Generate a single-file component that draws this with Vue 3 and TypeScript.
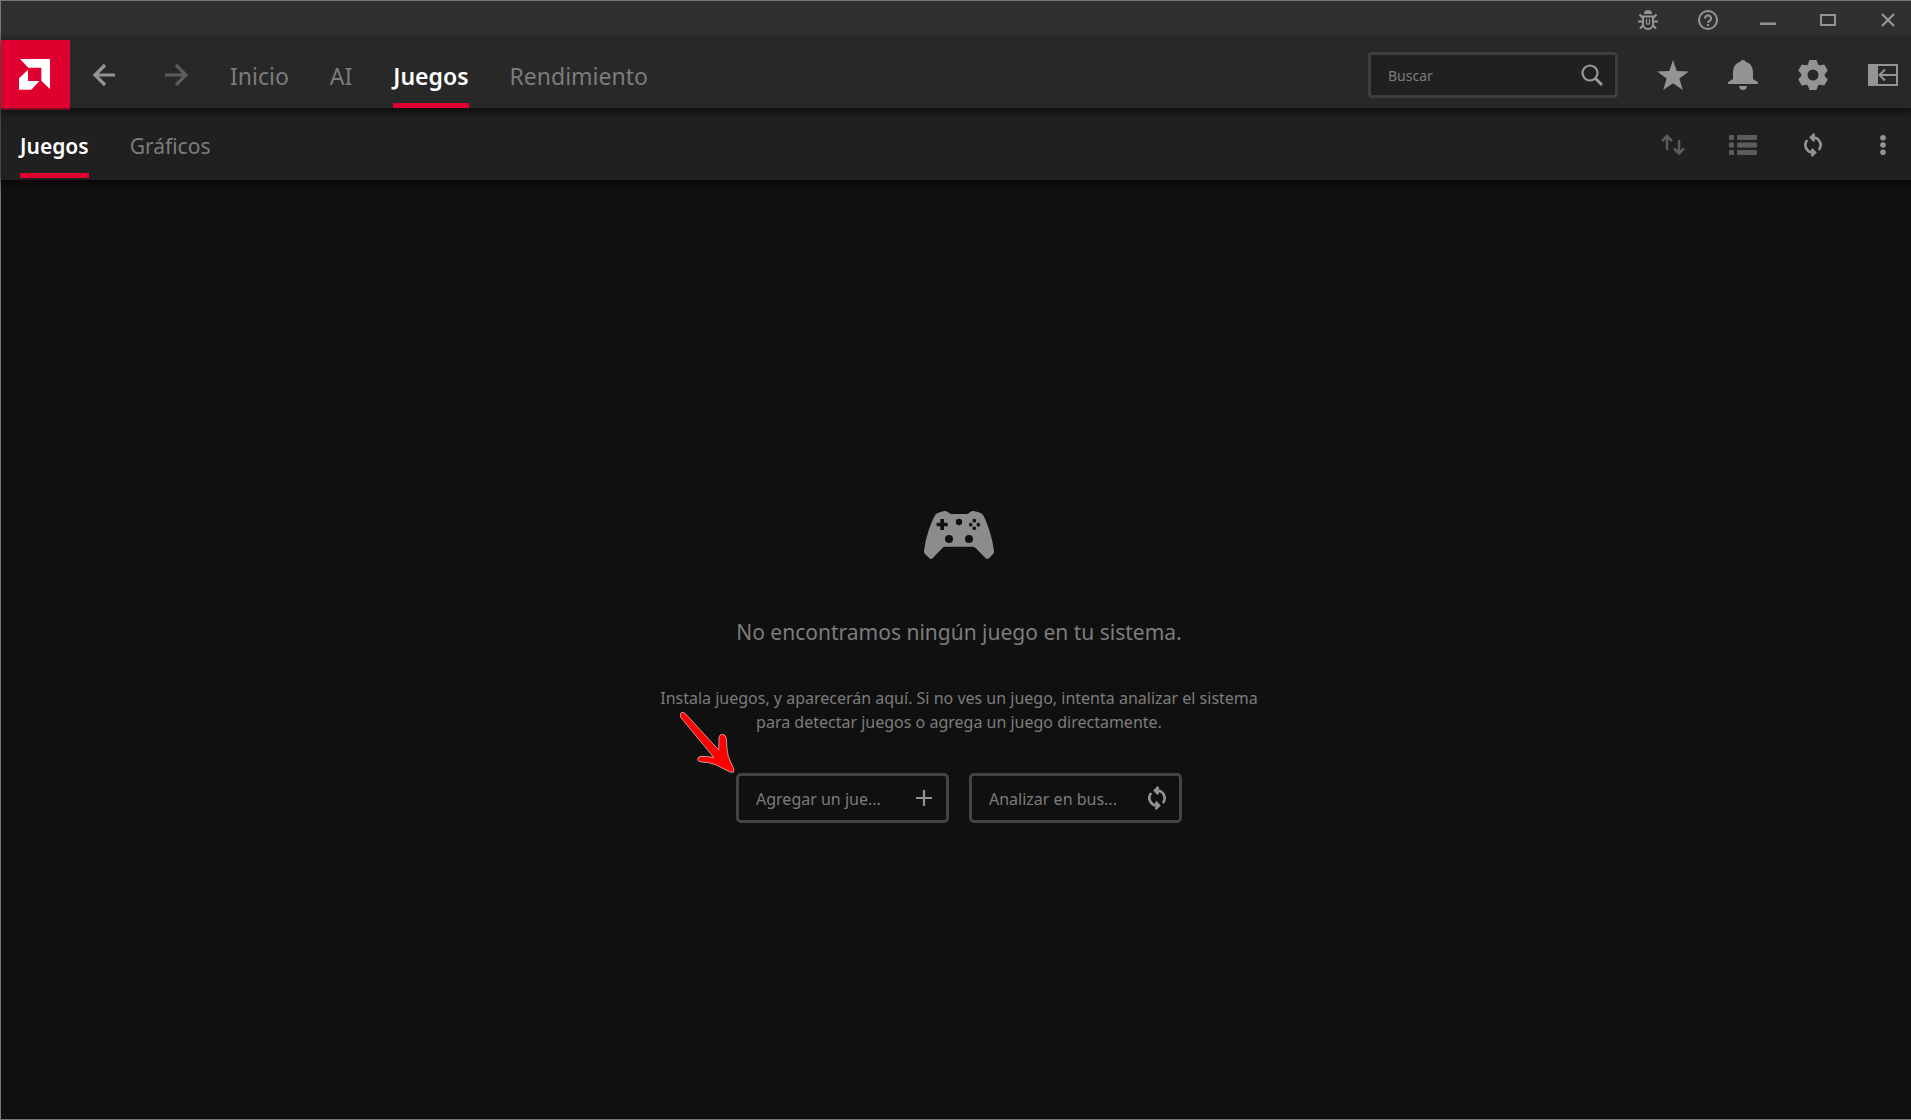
<script setup lang="ts">
import { ref } from 'vue'

interface Tab {
  id: string
  label: string
}

const mainTabs: Tab[] = [
  { id: 'home', label: 'Inicio' },
  { id: 'ai', label: 'AI' },
  { id: 'games', label: 'Juegos' },
  { id: 'performance', label: 'Rendimiento' },
]
const subTabs: Tab[] = [
  { id: 'games', label: 'Juegos' },
  { id: 'graphics', label: 'Gráficos' },
]

const activeMain = ref('games')
const activeSub = ref('games')
const query = ref('')
</script>

<template>
  <div class="window">
    <div class="titlebar">
      <button class="win-btn" type="button" aria-label="Informar de un error">
        <svg width="20" height="20" viewBox="0 0 20 20" fill="none" stroke="currentColor" stroke-width="2">
          <path d="M6 4a4 4 0 0 1 8 0z" fill="currentColor" stroke="none" />
          <path d="M5 6.500h10V14a5 5 0 0 1-10 0z" />
          <path d="M5 8L1.500 4.500M15 8l3.500-3.500M5 11.500H0M15 11.500h5M5.500 15L2 18.500M14.500 15l3.500 3.500" />
          <path d="M8.500 9v4.500M11.500 9v4.500M8 14h4" stroke-width="1.200" />
        </svg>
      </button>
      <button class="win-btn" type="button" aria-label="Ayuda">
        <svg width="20" height="20" viewBox="0 0 20 20" fill="none" stroke="currentColor" stroke-width="2">
          <circle cx="10" cy="10" r="9" />
          <path d="M7 8.500a3 3 0 1 1 4.500 2.500Q10 11.800 10 13" />
          <path d="M10 14v2" />
        </svg>
      </button>
      <button class="win-btn" type="button" aria-label="Minimizar">
        <svg width="16" height="16" viewBox="0 0 16 16"><path d="M0 10.500h16v2.500H0z" fill="currentColor" /></svg>
      </button>
      <button class="win-btn" type="button" aria-label="Maximizar">
        <svg width="16" height="12" viewBox="0 0 16 12">
          <path d="M1 1h14v10H1z" fill="none" stroke="currentColor" stroke-width="2" />
        </svg>
      </button>
      <button class="win-btn" type="button" aria-label="Cerrar">
        <svg width="14" height="14" viewBox="0 0 14 14">
          <path d="M1 1l12 12M13 1L1 13" stroke="currentColor" stroke-width="2.200" />
        </svg>
      </button>
    </div>

    <header class="header">
      <a class="logo" href="#" aria-label="AMD">
        <svg width="31" height="31" viewBox="57 177 93 93" fill="#fff">
          <path d="M60 177h90v90l-26-25v-39H85z" />
          <path d="M84 209v34h34l-24 26H57v-34z" />
        </svg>
      </a>
      <div class="history">
        <button class="arrow-btn" type="button" aria-label="Atrás">
          <svg width="24" height="24" viewBox="0 0 24 24" fill="none" stroke="currentColor" stroke-width="3.200">
            <path d="M23 12H3M13 2L3 12l10 10" />
          </svg>
        </button>
        <button class="arrow-btn dim" type="button" aria-label="Adelante">
          <svg width="24" height="24" viewBox="0 0 24 24" fill="none" stroke="currentColor" stroke-width="3.200">
            <path d="M1 12h21M12 2l10 10-10 10" />
          </svg>
        </button>
      </div>
      <nav class="tabs main-tabs" aria-label="Principal">
        <a
          v-for="tab in mainTabs"
          :key="tab.id"
          href="#"
          class="tab"
          :class="{ active: tab.id === activeMain }"
          @click.prevent="activeMain = tab.id"
        >{{ tab.label }}</a>
      </nav>

      <label class="search">
        <input v-model="query" type="text" placeholder="Buscar" aria-label="Buscar" />
        <svg width="22" height="22" viewBox="0 0 22 22" fill="none" stroke="currentColor">
          <circle cx="9" cy="9" r="7.500" stroke-width="2.200" />
          <path d="M14.500 14.500L21 21" stroke-width="3" />
        </svg>
      </label>

      <div class="tools">
        <button class="tool-btn" type="button" aria-label="Favoritos">
          <svg width="32" height="30" viewBox="82 181 94 89" fill="currentColor">
            <path d="M129 181l11 33 36 1-28 21 10 34-29-20-29 20 10-34-28-21 36-1z" />
          </svg>
        </button>
        <button class="tool-btn" type="button" aria-label="Notificaciones">
          <svg width="30" height="30" viewBox="294 180 90 90" fill="currentColor">
            <path d="M331 185q0-5 8-5t8 5q22 6 22 31v21l15 10v5h-90v-5l15-10v-21q0-25 22-31z" />
            <path d="M327 258h24q-2 12-12 12t-12-12z" />
          </svg>
        </button>
        <button class="tool-btn" type="button" aria-label="Configuración">
          <svg width="32" height="32" viewBox="-16 -16 32 32" fill="currentColor">
            <circle r="8.500" fill="none" stroke="currentColor" stroke-width="6" />
            <path
              v-for="turn in 6"
              :key="turn"
              d="M-5.500-9.500L-3.500-15h7L5.500-9.500z"
              :transform="`rotate(${turn * 60})`"
            />
          </svg>
        </button>
        <button class="tool-btn" type="button" aria-label="Contraer panel">
          <svg width="30" height="22" viewBox="0 0 30 22" fill="none" stroke="currentColor" stroke-width="2">
            <path d="M1 1h28v20H1z" />
            <path d="M0 0h10v22H0z" fill="currentColor" stroke="none" />
            <path d="M28 11H12M17 5.500L11.500 11l5.500 5.500" />
          </svg>
        </button>
      </div>
    </header>

    <div class="subbar">
      <nav class="tabs sub-tabs" aria-label="Juegos">
        <a
          v-for="tab in subTabs"
          :key="tab.id"
          href="#"
          class="tab"
          :class="{ active: tab.id === activeSub }"
          @click.prevent="activeSub = tab.id"
        >{{ tab.label }}</a>
      </nav>
      <div class="tools">
        <button class="tool-btn dim" type="button" aria-label="Ordenar">
          <svg width="24" height="22" viewBox="0 0 24 22" fill="none" stroke="currentColor" stroke-width="2.500">
            <path d="M6 16V2M1 7l5-5 5 5M18 6v13M13 14.500l5 5 5-5" />
          </svg>
        </button>
        <button class="tool-btn dim" type="button" aria-label="Vista de lista">
          <svg width="28" height="20" viewBox="0 0 28 20" fill="currentColor">
            <rect v-for="y in [0, 7.5, 15]" :key="y" x="0" :y="y" width="5" height="5" rx="1" />
            <rect v-for="y in [0, 7.5, 15]" :key="`r${y}`" x="8" :y="y" width="20" height="5" rx="1" />
          </svg>
        </button>
        <button class="tool-btn" type="button" aria-label="Actualizar">
          <svg width="18" height="24" viewBox="0 0 18 24" fill="none" stroke="currentColor" stroke-width="2.600">
            <path d="M7 4.500h2A7.600 7.600 0 0 1 14.800 17M11 19.500H9A7.600 7.600 0 0 1 3.200 7" />
            <path d="M10.500 1L7 4.500 10.500 8M7.500 16l3.500 3.500L7.500 23" />
          </svg>
        </button>
        <button class="tool-btn" type="button" aria-label="Más opciones">
          <svg width="6" height="20" viewBox="0 0 6 20" fill="currentColor">
            <circle cx="3" cy="2.800" r="2.800" />
            <circle cx="3" cy="10" r="2.800" />
            <circle cx="3" cy="17.200" r="2.800" />
          </svg>
        </button>
      </div>
    </div>

    <main class="content">
      <svg class="gamepad" width="70" height="48" viewBox="72 63 210 144" aria-hidden="true">
        <path
          fill="#8c8c8c"
          d="M104 78Q106 71 120 67L130 64Q138 62 143 66L152 72H203L211 66Q216 62 224 64L236 67Q248 71 251 78Q258 92 267 118Q278 150 282 182Q283 188 279 192L267 205Q262 209 257 205L226 173Q222 170 216 170H138Q132 170 128 173L98 205Q93 209 88 205L75 192Q71 188 72 182Q76 150 87 118Q96 92 104 78Z"
        />
        <g fill="#101010">
          <path d="M121 87h11v11h11v11h-11v11h-11v-11h-11V98h11z" />
          <circle cx="177" cy="96" r="9.500" />
          <circle cx="223" cy="92" r="5.500" />
          <circle cx="223" cy="115" r="5.500" />
          <circle cx="212" cy="104" r="5.500" />
          <circle cx="235" cy="104" r="5.500" />
          <circle cx="147" cy="147" r="12" />
          <circle cx="207" cy="147" r="12" />
        </g>
      </svg>
      <h1>No encontramos ningún juego en tu sistema.</h1>
      <p>
        Instala juegos, y aparecerán aquí. Si no ves un juego, intenta analizar el sistema<br />
        para detectar juegos o agrega un juego directamente.
      </p>
      <div class="actions">
        <div class="pointed">
          <button class="action" type="button">
            <span>Agregar un jue...</span>
            <svg width="24" height="24" viewBox="0 0 24 24">
              <path d="M12 4v16M4 12h16" stroke="currentColor" stroke-width="2.200" />
            </svg>
          </button>
          <svg class="pointer" width="57" height="63" viewBox="30 30 171 189" aria-hidden="true">
            <path
              fill="#ff0000"
              stroke="#f4dcdc"
              stroke-width="2"
              d="M34 44Q34 36 43 37L50 42L149 150Q150 125 150 112Q152 103 160 103Q170 104 172 115Q173 150 178 170L195 208L193 217L184 216Q160 205 142 195Q120 186 98 186Q86 185 86 178Q86 170 96 169Q115 169 134 172L35 52Z"
            />
          </svg>
        </div>
        <button class="action" type="button">
          <span>Analizar en bus...</span>
          <svg width="24" height="24" viewBox="-3 0 24 24" fill="none" stroke="currentColor" stroke-width="2.600">
            <path d="M7 4.500h2A7.600 7.600 0 0 1 14.800 17M11 19.500H9A7.600 7.600 0 0 1 3.200 7" />
            <path d="M10.500 1L7 4.500 10.500 8M7.500 16l3.500 3.500L7.500 23" />
          </svg>
        </button>
      </div>
    </main>
  </div>
</template>

<style>
body {
  margin: 0;
  background: #101010;
}
</style>

<style scoped>
.window {
  box-sizing: border-box;
  display: flex;
  flex-direction: column;
  min-height: 100vh;
  border: 1px solid #777;
  border-right: 0;
  background: #101010;
  color: #7c7c7c;
  font-family: "Noto Sans", "Open Sans", sans-serif;
}

button {
  padding: 0;
  border: 0;
  background: none;
  color: #949494;
  font-family: inherit;
  cursor: pointer;
}

svg {
  display: block;
  flex: none;
}

.titlebar {
  box-sizing: border-box;
  display: flex;
  justify-content: flex-end;
  gap: 14px;
  height: 39px;
  padding-bottom: 1px;
  background: #303030;
}

.win-btn {
  display: flex;
  align-items: center;
  justify-content: center;
  width: 46px;
}

.header {
  position: relative;
  z-index: 2;
  box-sizing: border-box;
  display: flex;
  align-items: center;
  height: 68px;
  padding-top: 2px;
  background: #282828;
  box-shadow: 0 2px 8px 2px rgba(0, 0, 0, 0.6);
}

.logo {
  box-sizing: border-box;
  display: flex;
  align-items: center;
  justify-content: center;
  align-self: stretch;
  width: 69px;
  margin-top: -2px;
  padding: 1px 2px 0 0;
  background: #e00030;
  box-shadow: 0 2px 0 #7c0a20;
}

.history {
  display: flex;
  gap: 48px;
  margin: 0 42px 0 22px;
}

.arrow-btn.dim,
.tool-btn.dim {
  color: #5c5c5c;
}

.tabs {
  display: flex;
  align-self: stretch;
  gap: 41px;
}

.tab {
  box-sizing: border-box;
  border-bottom: 5px solid transparent;
  color: inherit;
  text-decoration: none;
  white-space: nowrap;
}

.tab.active {
  border-bottom-color: #e00030;
  color: #fff;
  font-weight: 600;
}

.main-tabs .tab {
  padding-top: 2px;
  font-size: 23px;
  line-height: 64px;
  height: 66px;
}

.search {
  box-sizing: border-box;
  display: flex;
  align-items: center;
  width: 250px;
  height: 46px;
  margin: 0 27px 0 auto;
  padding: 0 12px 0 17px;
  border: 3px solid #3e3e3e;
  border-radius: 4px;
  background: #202020;
  color: #999;
}

.search input {
  flex: 1;
  min-width: 0;
  padding: 0;
  border: 0;
  outline: 0;
  background: none;
  color: #999;
  font: 14px "Noto Sans", "Open Sans", sans-serif;
}

.search input::placeholder {
  color: #7c7c7c;
  opacity: 1;
}

.tools {
  display: flex;
  gap: 14px;
}

.tool-btn {
  display: flex;
  align-items: center;
  justify-content: center;
  width: 56px;
  height: 48px;
}

.subbar {
  position: relative;
  z-index: 1;
  box-sizing: border-box;
  display: flex;
  align-items: center;
  justify-content: space-between;
  height: 72px;
  padding: 2px 0 0 19px;
  background: #202020;
  box-shadow: 0 2px 8px 2px rgba(0, 0, 0, 0.6);
}

.sub-tabs .tab {
  height: 68px;
  padding-top: 3px;
  font-size: 21px;
  line-height: 66px;
}

.content {
  display: flex;
  flex: 1;
  flex-direction: column;
  align-items: center;
  padding: 331px 0 40px 6px;
}

h1 {
  margin: 56px 0 0;
  font-size: 21px;
  font-weight: 400;
  line-height: 34px;
}

p {
  margin: 37px 0 0;
  font-size: 16px;
  line-height: 24px;
  text-align: center;
}

.actions {
  display: flex;
  gap: 20px;
  margin-top: 39px;
}

.pointed {
  position: relative;
}

.pointer {
  position: absolute;
  right: 100%;
  bottom: 100%;
}

.action {
  box-sizing: border-box;
  display: flex;
  align-items: center;
  justify-content: space-between;
  width: 213px;
  height: 50px;
  padding: 0 10px 0 17px;
  border: 3px solid #444;
  border-radius: 5px;
  font-size: 16px;
}

.action span {
  padding-top: 2px;
  color: #7c7c7c;
  white-space: nowrap;
}
</style>
